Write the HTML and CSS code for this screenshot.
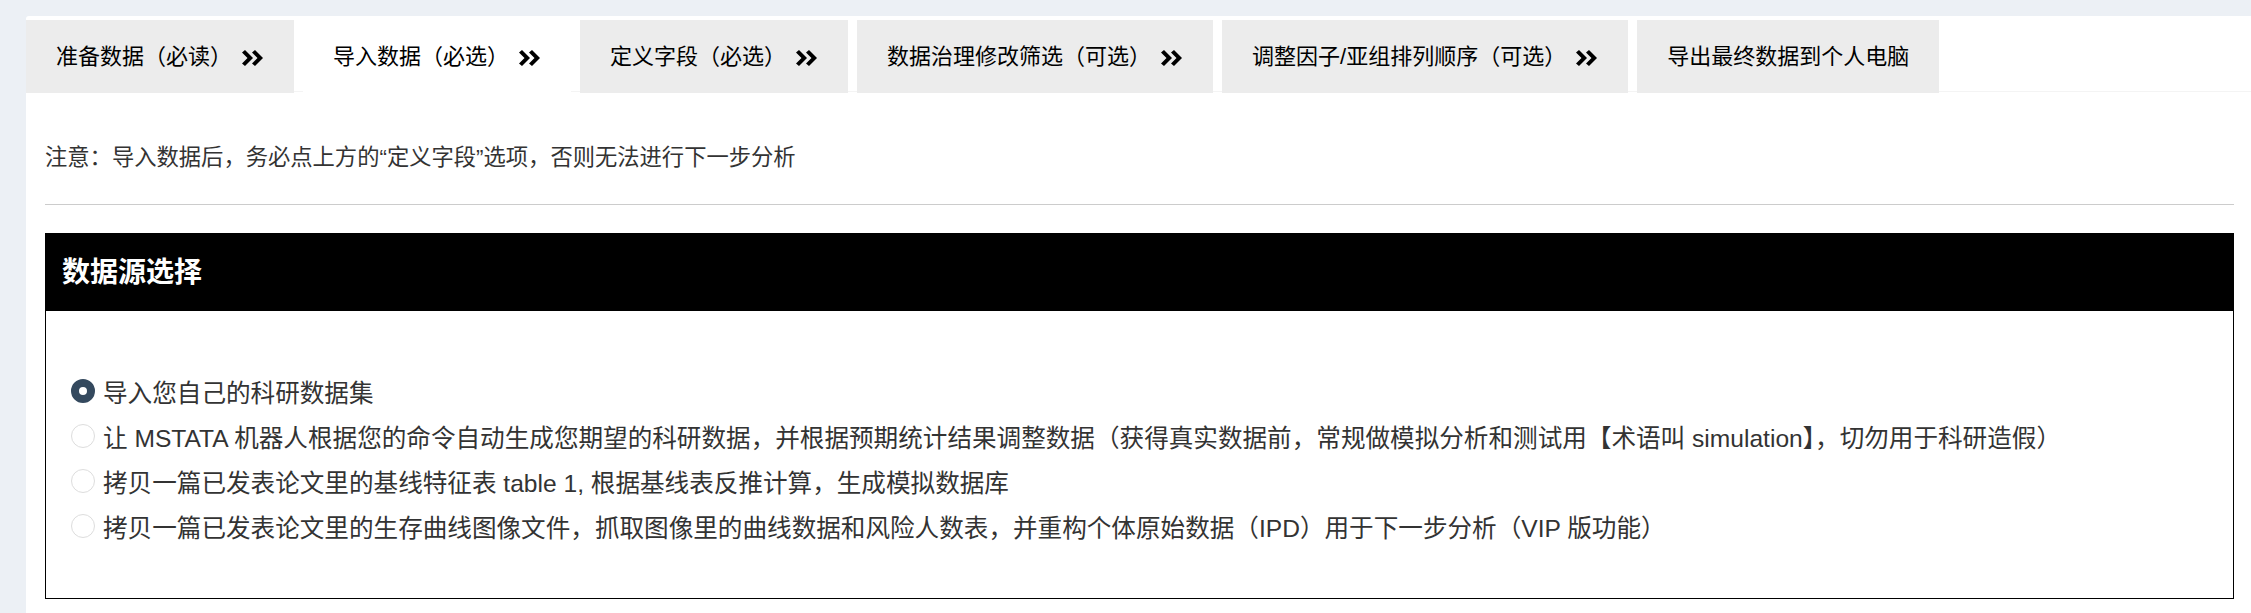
FILE: index.html
```html
<!DOCTYPE HTML>
<html lang="zh-CN">
<head>
<meta charset="UTF-8">
<title>导入数据</title>
<link rel="stylesheet" href="styles.css">
</head>
<body>
<div class="wrapper">
	<div class="panel">
		<ul class="tabs">
			<li>准备数据（必读）<svg class="arrow" viewBox="0 0 22 16" width="22" height="16"><path d="M0 2.5L3 0l8 8-8 8-3-2.5L5.5 8zM10 2.5L13 0l8 8-8 8-3-2.5L15.5 8z"/></svg></li>
			<li class="active">导入数据（必选）<svg class="arrow" viewBox="0 0 22 16" width="22" height="16"><path d="M0 2.5L3 0l8 8-8 8-3-2.5L5.5 8zM10 2.5L13 0l8 8-8 8-3-2.5L15.5 8z"/></svg></li>
			<li>定义字段（必选）<svg class="arrow" viewBox="0 0 22 16" width="22" height="16"><path d="M0 2.5L3 0l8 8-8 8-3-2.5L5.5 8zM10 2.5L13 0l8 8-8 8-3-2.5L15.5 8z"/></svg></li>
			<li>数据治理修改筛选（可选）<svg class="arrow" viewBox="0 0 22 16" width="22" height="16"><path d="M0 2.5L3 0l8 8-8 8-3-2.5L5.5 8zM10 2.5L13 0l8 8-8 8-3-2.5L15.5 8z"/></svg></li>
			<li>调整因子/亚组排列顺序（可选）<svg class="arrow" viewBox="0 0 22 16" width="22" height="16"><path d="M0 2.5L3 0l8 8-8 8-3-2.5L5.5 8zM10 2.5L13 0l8 8-8 8-3-2.5L15.5 8z"/></svg></li>
			<li>导出最终数据到个人电脑</li>
		</ul>
		<div class="pane">
			<p class="note">注意：导入数据后，务必点上方的“定义字段”选项，否则无法进行下一步分析</p>
			<hr />
			<div class="box">
				<h3 class="box-title">数据源选择</h3>
				<div class="box-body">
					<label class="opt"><input type="radio" name="source" checked />导入您自己的科研数据集</label>
					<label class="opt"><input type="radio" name="source" />让 MSTATA 机器人根据您的命令自动生成您期望的科研数据，并根据预期统计结果调整数据（获得真实数据前，常规做模拟分析和测试用【术语叫 simulation】，切勿用于科研造假）</label>
					<label class="opt"><input type="radio" name="source" />拷贝一篇已发表论文里的基线特征表 table 1, 根据基线表反推计算，生成模拟数据库</label>
					<label class="opt"><input type="radio" name="source" />拷贝一篇已发表论文里的生存曲线图像文件，抓取图像里的曲线数据和风险人数表，并重构个体原始数据（IPD）用于下一步分析（VIP 版功能）</label>
				</div>
			</div>
		</div>
	</div>
</div>
</body>
</html>
```

FILE: styles.css
```css
html, body, ul, li, p, h3, hr { margin:0; padding:0; }
body { font:22px "Liberation Sans","Noto Sans CJK SC",sans-serif; color:#333; background-color:#ECF0F5; }
.wrapper { padding:16px 0 0 26px; }
.panel { min-height:calc(100vh - 16px); background-color:#FFF; border-radius:3px 0 0 0; }
.tabs { display:flex; padding-top:4px; list-style:none; border-bottom:1px solid #F4F4F4; }
.tabs li { margin:0 9px -2px 0; padding:20px 30px; line-height:33px; color:#000; white-space:nowrap; background-color:#ECECEC; }
.tabs li.active { background-color:#FFF; }
.tabs .arrow { margin-left:10px; vertical-align:middle; }
.pane { padding:0 17px 0 19px; }
.note { margin-top:49px; font-size:22.3px; line-height:33px; }
hr { margin-top:30px; border:0 none; border-top:1px solid #CCC; }
.box { margin-top:28px; border:1px solid #000; }
.box-title { height:77px; padding:0 16px; line-height:77px; font-size:28px; font-weight:bold; color:#FFF; background-color:#000; }
.box-body { padding:57px 25px 50px; }
.opt { display:flex; align-items:center; height:45px; font-size:24.6px; color:#333; }
.opt input { -webkit-appearance:none; appearance:none; box-sizing:border-box; flex:none; width:24px; height:24px; margin:0 8px 0 0; border:1px solid #DDD; border-radius:50%; }
.opt input:checked { border:8px solid #34495E; }
```
